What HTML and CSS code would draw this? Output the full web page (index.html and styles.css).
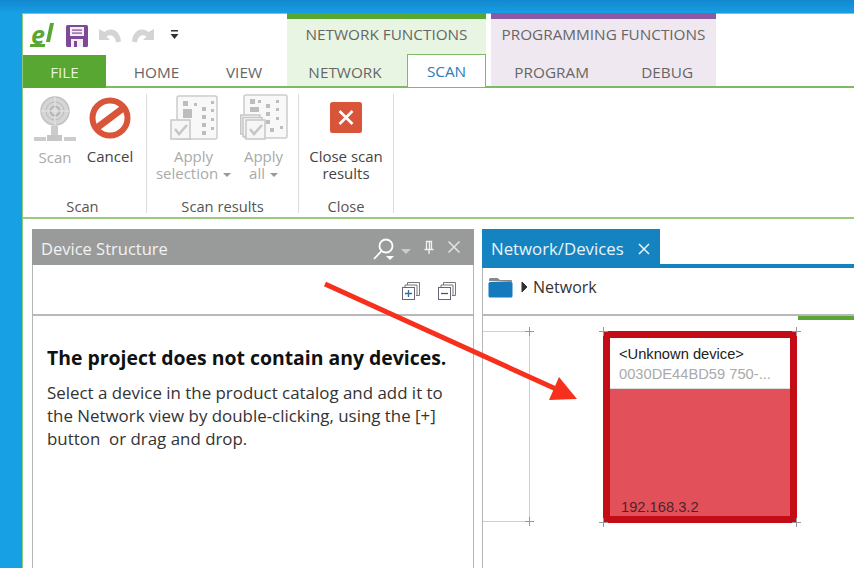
FILE: index.html
```html
<!DOCTYPE html>
<html lang="en">
<head>
<meta charset="utf-8">
<title>Network scan</title>
<link rel="stylesheet" href="styles.css">
</head>
<body>
<div class="window">
  <header class="head">
    <div class="main-head">
      <div class="qat">
        <div class="logo">e</div>
        <svg class="save" width="24" height="24" viewBox="0 0 24 24"><rect x="1" y="1" width="22" height="22" rx="1.500" fill="#7d4a97"/><rect x="5" y="3" width="14" height="9" fill="#f3eef6"/><rect x="7" y="5.500" width="10" height="1.200" fill="#7d4a97"/><rect x="7" y="8.500" width="10" height="1.200" fill="#7d4a97"/><rect x="6" y="15" width="12" height="8" fill="#f3eef6"/><rect x="9" y="17" width="3" height="6" fill="#7d4a97"/></svg>
        <svg class="undo" width="25" height="18" viewBox="0 0 25 18"><path d="M1 2v11h11l-3.500-3.500c3.500-2.500 7.500-1 9 3.500l.5 2.500 5-1C22.500 7 18 2.500 13 2.500c-2.500 0-5 1-6.500 2.500L1 2z" fill="#d4d4d4"/></svg>
        <svg class="redo" width="25" height="18" viewBox="0 0 25 18"><path d="M24 2v11H13l3.500-3.500c-3.500-2.500-7.500-1-9 3.500L7 15.500l-5-1C2.500 7 7 2.500 12 2.500c2.500 0 5 1 6.500 2.500L24 2z" fill="#d4d4d4"/></svg>
        <svg class="more" width="9" height="11" viewBox="0 0 9 11"><rect x="1" y="1" width="7" height="1.500" fill="#333"/><path d="M0.500 5h8L4.500 10z" fill="#333"/></svg>
      </div>
      <nav class="tabs">
        <span class="tab tab-file">FILE</span>
        <span class="tab tab-home">HOME</span>
        <span class="tab tab-view">VIEW</span>
      </nav>
    </div>
    <div class="context context-net">
      <div class="context-title">NETWORK FUNCTIONS</div>
      <nav class="tabs">
        <span class="tab tab-network">NETWORK</span>
        <span class="tab tab-scan">SCAN</span>
      </nav>
    </div>
    <div class="context context-prog">
      <div class="context-title">PROGRAMMING FUNCTIONS</div>
      <nav class="tabs">
        <span class="tab tab-program">PROGRAM</span>
        <span class="tab tab-debug">DEBUG</span>
      </nav>
    </div>
  </header>

  <section class="ribbon">
    <div class="group group-scan">
      <div class="buttons">
        <div class="btn btn-scan disabled">
          <svg width="46" height="48" viewBox="0 0 46 48"><circle cx="23" cy="16" r="14" fill="#d5d5d5"/><circle cx="23" cy="16" r="14" fill="none" stroke="#c2c2c2" stroke-width="1.500"/><circle cx="23" cy="16" r="9" fill="none" stroke="#bbb"/><circle cx="23" cy="16" r="4.500" fill="none" stroke="#aaa" stroke-width="1.500"/><path d="M23 2v28M9 16h28" stroke="#e8e8e8"/><rect x="19" y="31" width="7" height="9" fill="#ccc"/><rect x="2" y="42" width="12" height="4" fill="#ccc"/><rect x="15" y="40" width="15" height="6" fill="#c6c6c6"/><rect x="32" y="42" width="12" height="4" fill="#ccc"/></svg>
          <span class="label">Scan</span>
        </div>
        <div class="btn btn-cancel">
          <svg width="42" height="42" viewBox="0 0 42 42"><circle cx="21" cy="21" r="17.500" fill="#fff" stroke="#d9553a" stroke-width="6"/><path d="M9 30L33 12" stroke="#d9553a" stroke-width="7"/></svg>
          <span class="label">Cancel</span>
        </div>
      </div>
      <div class="group-name">Scan</div>
    </div>
    <div class="group group-results">
      <div class="buttons">
        <div class="btn btn-sel disabled">
          <svg width="48" height="48" viewBox="0 0 48 48"><rect x="7" y="2" width="40" height="43" rx="2" fill="#f8f8f8" stroke="#ccc" stroke-width="1.500"/><path d="M13 7h5v5h-5zM13 15h9v9h-9zM24 9h3v3h-3zM32 13h4v4h-4zM41 7h3v3h-3zM32 21h4v4h-4zM41 15h3v3h-3zM32 29h4v4h-4zM41 24h3v3h-3zM32 37h4v4h-4zM41 33h3v3h-3z" fill="#bdbdbd"/><rect x="1" y="26" width="19" height="19" fill="#f6f6f6" stroke="#c6c6c6" stroke-width="1.500"/><path d="M5 35l4 5 8-9" fill="none" stroke="#c6c6c6" stroke-width="2.500"/></svg>
          <span class="label">Apply<br>selection <i class="caret"></i></span>
        </div>
        <div class="btn btn-all disabled">
          <svg width="48" height="48" viewBox="0 0 48 48"><rect x="4" y="1" width="43" height="43" rx="2" fill="#f8f8f8" stroke="#ccc" stroke-width="1.500"/><path d="M10 5h5v5h-5zM18 6h3v3h-3zM10 13h9v5h-9zM26 10h4v4h-4zM36 6h3v3h-3zM26 18h4v4h-4zM36 14h3v3h-3zM26 26h4v4h-4zM36 23h3v3h-3zM30 34h4v4h-4zM40 32h3v3h-3z" fill="#bdbdbd"/><rect x="0.800" y="21" width="19" height="19" fill="#f6f6f6" stroke="#c6c6c6" stroke-width="1.500"/><rect x="3" y="23.500" width="19" height="19" fill="#f6f6f6" stroke="#c6c6c6" stroke-width="1.500"/><rect x="6" y="26" width="19" height="19" fill="#f6f6f6" stroke="#c6c6c6" stroke-width="1.500"/><path d="M10 35l4 5 8-9" fill="none" stroke="#c6c6c6" stroke-width="2.500"/></svg>
          <span class="label">Apply<br>all <i class="caret"></i></span>
        </div>
      </div>
      <div class="group-name">Scan results</div>
    </div>
    <div class="group group-close">
      <div class="buttons">
        <div class="btn btn-close">
          <svg width="34" height="34" viewBox="0 0 34 34"><rect x="1" y="1" width="32" height="31" rx="2.500" fill="#d9553a"/><path d="M10.500 10l13 13M23.500 10l-13 13" stroke="#fff" stroke-width="2.600"/></svg>
          <span class="label">Close scan<br>results</span>
        </div>
      </div>
      <div class="group-name">Close</div>
    </div>
  </section>

  <main class="workspace">
    <section class="panel">
      <div class="panel-head">
        <span class="panel-title">Device Structure</span>
        <svg class="p-search" width="40" height="24" viewBox="0 0 40 24"><circle cx="14" cy="9" r="6.500" fill="none" stroke="#fff" stroke-width="1.800"/><path d="M9.500 14L2 22" stroke="#fff" stroke-width="1.800"/><path d="M14 19h8l-4 4z" fill="#fff"/><path d="M29 12h10l-5 5z" fill="#ccc"/></svg>
        <svg class="p-pin" width="12" height="15" viewBox="0 0 12 15"><path d="M3.500 1.500h5v8h-5zM1.500 9.500h9M6 9.500V14M6.500 2v7" fill="none" stroke="#f2f2f2" stroke-width="1.300"/></svg>
        <svg class="p-x" width="14" height="14" viewBox="0 0 14 14"><path d="M1.500 1.500l11 11M12.500 1.500l-11 11" stroke="#e4e4e4" stroke-width="1.500"/></svg>
      </div>
      <div class="panel-tools">
        <svg width="20" height="20" viewBox="0 0 20 20"><path d="M6.500 4V1.500h12v13H15M4 6.500V4h12v11" fill="none" stroke="#777"/><rect x="1.500" y="6.500" width="12" height="12" fill="#fff" stroke="#667"/><path d="M7.500 9v7M4 12.500h7" stroke="#2f6f9f" stroke-width="1.300"/></svg>
        <svg width="20" height="20" viewBox="0 0 20 20"><path d="M6.500 4V1.500h12v13H15M4 6.500V4h12v11" fill="none" stroke="#777"/><rect x="1.500" y="6.500" width="12" height="12" fill="#fff" stroke="#667"/><path d="M4 12.500h7" stroke="#555" stroke-width="1.300"/></svg>
      </div>
      <div class="message">
        <h2>The project does not contain any devices.</h2>
        <p>Select a device in the product catalog and add it to the Network view by double-clicking, using the [+] button&nbsp; or drag and drop.</p>
      </div>
    </section>
    <section class="doc">
      <div class="doc-tabbar">
        <div class="doc-tab">
          <span>Network/Devices</span>
          <svg width="14" height="14" viewBox="0 0 14 14"><path d="M2 2l10 10M12 2L2 12" stroke="#e8f4fb" stroke-width="1.500"/></svg>
        </div>
      </div>
      <div class="crumbs">
        <svg width="25" height="21" viewBox="0 0 25 21"><path d="M1 4V2.500Q1 1 2.500 1h7L12 3h11.500Q24 3 24 4.500V5z" fill="#888"/><rect x="0.500" y="5" width="24" height="15.500" rx="1.500" fill="#1479bd"/></svg>
        <svg class="crumb-arrow" width="7" height="12" viewBox="0 0 7 12"><path d="M1 1l5 5-5 5z" fill="#333" stroke="#333"/></svg>
        <span>Network</span>
      </div>
      <div class="canvas">
        <div class="green-bar"></div>
        <div class="guide"></div>
        <div class="tick tick-a"></div>
        <div class="tick tick-b"></div>
        <div class="device">
          <div class="device-top">
            <div class="device-name">&lt;Unknown device&gt;</div>
            <div class="device-id">0030DE44BD59 750-...</div>
          </div>
          <div class="device-body">192.168.3.2</div>
        </div>
        <div class="tick tick-c"></div>
        <div class="tick tick-d"></div>
        <div class="tick tick-e"></div>
        <div class="tick tick-f"></div>
      </div>
    </section>
  </main>
</div>
<svg class="arrow" width="854" height="568" viewBox="0 0 854 568"><path d="M325 284L556 389" stroke="#f7301e" stroke-width="5"/><path d="M559 377L577 399 549 400z" fill="#f7301e"/></svg>
</body>
</html>
```
FILE: styles.css
```css
* { box-sizing: border-box; }
html, body { margin: 0; height: 100%; overflow: hidden; }
body {
  background: #1aa5ea;
  background-image: linear-gradient(#1288d0, #18a0e4 14px);
  padding: 13px 0 0 22px;
  font-family: "Open Sans", "Noto Sans", sans-serif;
  color: #555;
  position: relative;
}
.window {
  height: 100%;
  background: #fff;
  border-left: 1.500px solid #8cc97a;
  border-top: 1px solid #8cc97a;
  display: flex;
  flex-direction: column;
}
.head { display: flex; height: 74px; border-bottom: 2px solid #7dbb62; flex: none; }
.main-head { width: 264px; display: flex; flex-direction: column; }
.qat { height: 41px; display: flex; align-items: center; padding: 2px 0 0 7px; }
.logo { position: relative; width: 23px; height: 25px; margin-right: 12px; font: italic 700 25px/22px "Open Sans", sans-serif; color: #58a732; padding-left: 1px; }
.logo::before { content: ""; position: absolute; right: 1px; top: 0; width: 4px; height: 19px; background: #58a732; transform: skewX(-12deg); }
.logo::after { content: ""; position: absolute; left: 0; bottom: 1px; width: 15px; height: 3px; background: #58a732; transform: skewX(-12deg); }
.save { margin-right: 9px; }
.undo { margin-right: 7px; }
.redo { margin-right: 15px; }
.more { margin-top: -3px; }
.tabs { display: flex; height: 31px; }
.tab { display: flex; align-items: center; justify-content: center; font-size: 15.300px; color: #666; height: 33px; white-space: nowrap; }
.tab-file { width: 83px; background: #58a732; color: #e6f3dd; }
.tab-home { width: 101px; }
.tab-view { width: 74px; }
.context { border-top: 6px solid #58a732; background: #e9f5e3; display: flex; flex-direction: column; }
.context-net { width: 199px; margin-top: -1px; }
.context-prog { width: 225px; margin-left: 5px; margin-top: -1px; border-top-color: #8a5aa5; background: #efe8f1; }
.context-title { height: 36px; text-align: center; font-size: 15.300px; line-height: 30px; color: #666; white-space: nowrap; }
.tab-network { width: 120px; padding-right: 4px; }
.tab-scan { width: 79px; height: 33px; margin-top: -1px; background: #fff; color: #2b7db5; border: 1.500px solid #7dbb62; border-bottom: 0; }
.tab-program { width: 122px; padding-left: 2px; }
.tab-debug { width: 108px; padding-left: 8px; }

.ribbon { height: 131px; flex: none; display: flex; background: #fff; border-bottom: 2px solid #9acb85; padding-top: 6px; }
.group { display: flex; flex-direction: column; align-items: center; border-right: 1.500px solid #dcdcdc; height: 119px; }
.group-scan { width: 124px; padding-right: 4px; }
.group-scan .buttons { align-self: stretch; padding-left: 8px; }
.group-results { width: 152px; }
.group-close { width: 95px; }
.buttons { display: flex; height: 98px; flex: none; }
.btn { display: flex; flex-direction: column; align-items: center; }
.btn svg { height: 48px; flex: none; }
.btn-scan { width: 48px; margin-right: 1px; padding-top: 1px; }
.btn-cancel { width: 60px; padding-top: 3px; }
.btn-cancel svg { height: 42px; margin-bottom: 3px; }
.btn-sel { width: 74px; margin-right: 0; margin-left: 6px; }
.btn-all { width: 66px; margin-right: -2px; }
.btn-close { width: 90px; padding-top: 7px; }
.btn-close svg { height: 34px; margin-bottom: 7px; }
.label { font-size: 15px; line-height: 17px; text-align: center; color: #444; margin-top: 6px; white-space: nowrap; }
.disabled .label { color: #aaa; }
.caret { display: inline-block; border: 4px solid transparent; border-top-color: #999; border-bottom: 0; vertical-align: 2px; margin-left: 1px; }
.group-name { font-size: 14.700px; line-height: 18px; color: #555; margin-top: 5px; }

.workspace { flex: 1; min-height: 0; display: flex; padding: 10px 0 0 9px; gap: 8px; }
.panel { width: 442px; border-left: 1.500px solid #b5b5b5; border-right: 1.500px solid #b5b5b5; display: flex; flex-direction: column; }
.panel-head { height: 36px; margin: 0 -1px; background: #999b9a; display: flex; align-items: center; padding: 0 13px 0 9px; flex: none; }
.panel-title { font-size: 16.500px; color: #f2f2f2; flex: 1; padding-top: 3px; }
.p-search { margin-right: 11px; margin-top: 3px; }
.p-pin { margin-right: 12px; }
.panel-tools { height: 51px; border-bottom: 2px solid #b9b9b9; display: flex; justify-content: flex-end; align-items: center; gap: 16px; padding: 2px 16px 0 0; flex: none; }
.message { padding: 30px 14px 0; }
.message h2 { margin: 0 0 11px; font-size: 19.400px; line-height: 24px; font-weight: 700; color: #111; white-space: nowrap; }
.message p { margin: 0; font-size: 16.900px; line-height: 23px; color: #333; width: 412px; }

.doc { flex: 1; min-width: 0; display: flex; flex-direction: column; }
.doc-tabbar { height: 39px; border-bottom: 4px solid #1583c0; flex: none; }
.doc-tab { width: 178px; height: 36px; background: #1583c0; color: #e8f4fb; font-size: 16.800px; display: flex; align-items: center; gap: 13px; padding: 3px 0 0 9px; }
.crumbs { height: 48px; margin-left: 0; border-left: 1.500px solid #b5b5b5; border-bottom: 2px solid #b9b9b9; display: flex; align-items: center; padding: 0 0 8px 5px; gap: 5px; font-size: 16px; color: #333; flex: none; }
.crumb-arrow { margin-left: 3px; }
.canvas { flex: 1; position: relative; border-left: 1.500px solid #b5b5b5; }
.green-bar { position: absolute; left: 315px; right: 0; top: 0; height: 4px; background: #5aa636; }
.guide { position: absolute; left: 0; top: 15px; width: 47px; height: 191px; border: 1px solid #d0d0d0; border-left: 0; }
.tick { position: absolute; width: 9px; height: 9px; background: linear-gradient(#999, #999) center / 100% 1px no-repeat, linear-gradient(#999, #999) center / 1px 100% no-repeat; }
.tick-a { left: 42px; top: 11px; }
.tick-b { left: 42px; top: 201px; }
.tick-c { left: 116px; top: 11px; }
.tick-d { left: 309px; top: 11px; }
.tick-e { left: 116px; top: 202px; }
.tick-f { left: 309px; top: 202px; }
.device { position: absolute; left: 120px; top: 15px; width: 194px; height: 192px; border: 7px solid #c30c15; display: flex; flex-direction: column; font-family: "Liberation Sans", Arial, sans-serif; }
.device-top { height: 51px; background: #fff; padding: 6px 0 0 9px; font-size: 14.700px; line-height: 20px; border-bottom: 1px solid #ddd; white-space: nowrap; }
.device-name { color: #222; }
.device-id { color: #aaa; }
.device-body { flex: 1; background: #e2505a; color: #50232a; font-size: 14.700px; display: flex; align-items: flex-end; padding: 0 0 0 11px; line-height: 18px; }
.arrow { position: absolute; left: 0; top: 0; pointer-events: none; }
```
